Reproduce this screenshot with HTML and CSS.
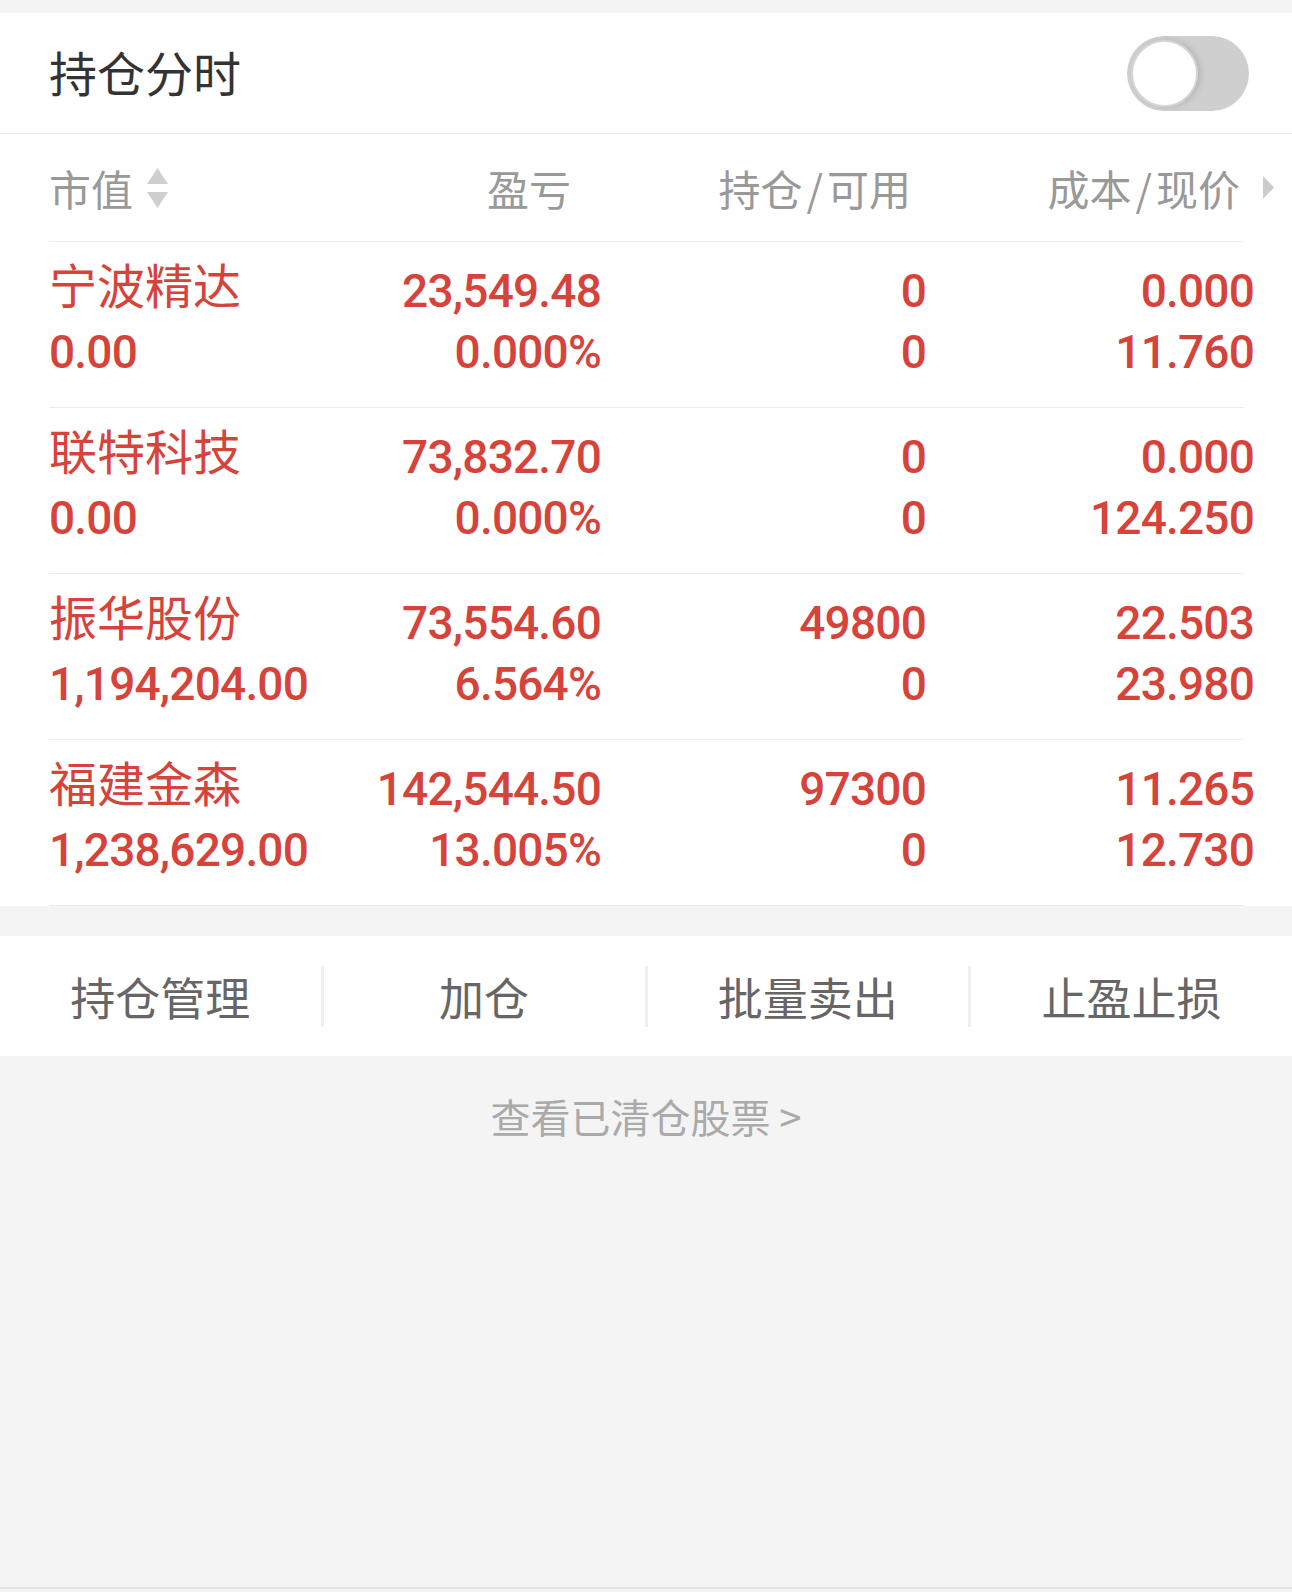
FILE: index.html
```html
<!DOCTYPE html>
<html lang="zh-CN">
<head>
<meta charset="utf-8">
<title>持仓分时</title>
<link rel="stylesheet" href="styles.css">
</head>
<body>
<div class="page">
  <div class="top-gap"></div>
  <div class="switch-row">
    <div class="title">持仓分时</div>
    <div class="toggle"><div class="knob"></div></div>
  </div>

  <div class="list">
    <div class="thead">
      <div class="th th-first">市值
        <svg class="sort" width="21" height="40" viewBox="0 0 21 40"><path d="M0 16 L10.5 0 L21 16 Z" fill="#cfcfcf"/><path d="M0 24 L21 24 L10.5 40 Z" fill="#cfcfcf"/></svg>
      </div>
      <div class="th th-pl">盈亏</div>
      <div class="th th-pos">持仓<span class="slash">/</span>可用</div>
      <div class="th th-cost">成本<span class="slash">/</span>现价
        <svg class="more" width="11" height="23" viewBox="0 0 11 23"><path d="M0 0 L11 11.5 L0 23 Z" fill="#cccccc"/></svg>
      </div>
    </div>

    <div class="row">
      <div class="cell left"><div class="name">宁波精达</div><div class="num">0.00</div></div>
      <div class="cell right"><div class="num">23,549.48</div><div class="num">0.000%</div></div>
      <div class="cell right"><div class="num">0</div><div class="num">0</div></div>
      <div class="cell right"><div class="num">0.000</div><div class="num">11.760</div></div>
    </div>
    <div class="row">
      <div class="cell left"><div class="name">联特科技</div><div class="num">0.00</div></div>
      <div class="cell right"><div class="num">73,832.70</div><div class="num">0.000%</div></div>
      <div class="cell right"><div class="num">0</div><div class="num">0</div></div>
      <div class="cell right"><div class="num">0.000</div><div class="num">124.250</div></div>
    </div>
    <div class="row">
      <div class="cell left"><div class="name">振华股份</div><div class="num">1,194,204.00</div></div>
      <div class="cell right"><div class="num">73,554.60</div><div class="num">6.564%</div></div>
      <div class="cell right"><div class="num">49800</div><div class="num">0</div></div>
      <div class="cell right"><div class="num">22.503</div><div class="num">23.980</div></div>
    </div>
    <div class="row">
      <div class="cell left"><div class="name">福建金森</div><div class="num">1,238,629.00</div></div>
      <div class="cell right"><div class="num">142,544.50</div><div class="num">13.005%</div></div>
      <div class="cell right"><div class="num">97300</div><div class="num">0</div></div>
      <div class="cell right"><div class="num">11.265</div><div class="num">12.730</div></div>
    </div>
  </div>

  <div class="gap"></div>
  <div class="actions">
    <div class="action">持仓管理</div>
    <div class="action">加仓</div>
    <div class="action">批量卖出</div>
    <div class="action">止盈止损</div>
  </div>

  <div class="cleared">查看已清仓股票 &gt;</div>
  <div class="bottom-line"></div>
</div>
</body>
</html>
```

FILE: styles.css
```css
* { box-sizing: border-box; }
html, body { margin: 0; padding: 0; }
body {
  background: #f4f4f4;
  font-family: "Noto Sans CJK SC", "Noto Sans", sans-serif;
}
.page {
  width: 1292px;
  height: 1592px;
  display: flex;
  flex-direction: column;
  overflow: hidden;
}
.top-gap { height: 13px; flex: none; }
.switch-row {
  flex: none;
  height: 121px;
  background: #fff;
  border-bottom: 1px solid #ececec;
  display: flex;
  align-items: center;
  justify-content: space-between;
  padding: 0 43px 0 49px;
}
.title {
  font-size: 48px;
  line-height: 48px;
  color: #333;
  padding-bottom: 5px;
}
.toggle {
  width: 122px;
  height: 75px;
  border-radius: 38px;
  background: #cfcfcf;
  display: flex;
  align-items: center;
  padding-left: 4px;
}
.knob {
  width: 67px;
  height: 67px;
  border-radius: 50%;
  background: #fff;
  border: 2px solid #d6d6d6;
  box-shadow: 3px 0 6px rgba(0,0,0,0.12);
}
.list {
  flex: none;
  background: #fff;
  padding: 0 48px 0 49px;
}
.thead {
  height: 108px;
  border-bottom: 1px solid #ececec;
  display: grid;
  grid-template-columns: 276px 276px 325px 328px;
  align-items: center;
  font-size: 42px;
  color: #999;
}
.th { display: flex; align-items: center; line-height: 50px; }
.th-first { justify-content: flex-start; }
.sort { margin-left: 14px; }
.th-pl { justify-content: flex-end; padding-right: 30px; }
.th-pos { justify-content: flex-end; padding-right: 15px; }
.th-cost { justify-content: flex-end; margin-right: -20px; }
.slash { margin: 0 4px; }
.more { margin-left: 23px; }
.row {
  display: grid;
  grid-template-columns: 276px 276px 325px 328px;
  padding: 19px 0 24px;
  border-bottom: 1px solid #ececec;
  color: #d6433b;
}
.cell.right { text-align: right; }
.name {
  font-size: 48px;
  line-height: 45px;
  margin-bottom: 16px;
}
.num {
  font-family: Roboto, "Liberation Sans", sans-serif;
  font-size: 46px;
  font-weight: 500;
  letter-spacing: -0.8px;
  line-height: 61px;
  white-space: nowrap;
}
.gap { height: 30px; flex: none; }
.actions {
  flex: none;
  height: 120px;
  background: #fff;
  display: flex;
  align-items: center;
}
.action {
  flex: 1;
  height: 61px;
  display: flex;
  align-items: center;
  justify-content: center;
  font-size: 45px;
  color: #666;
}
.action + .action { border-left: 3px solid #efefef; }
.cleared {
  flex: none;
  margin-top: 32px;
  text-align: center;
  font-size: 40px;
  line-height: 56px;
  color: #aaa;
}
.bottom-line {
  margin-top: auto;
  height: 2px;
  background: #e4e4e4;
  margin-bottom: 3px;
  flex: none;
}
```
